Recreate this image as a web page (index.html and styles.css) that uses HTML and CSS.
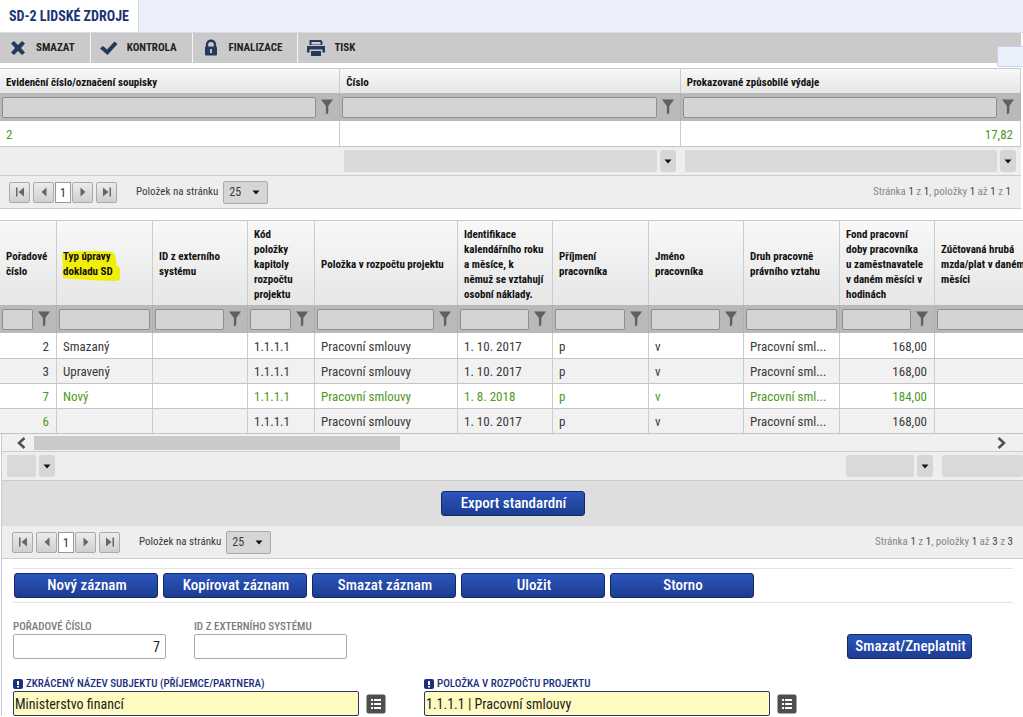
FILE: index.html
```html
<!DOCTYPE html>
<html lang="cs">
<head>
<meta charset="utf-8">
<title>SD-2 Lidské zdroje</title>
<link rel="stylesheet" href="styles.css">
</head>
<body>
<svg class="defs" aria-hidden="true">
  <symbol id="funnel" viewBox="0 0 12 16"><path d="M0 0.500H12L7.300 7V14L4.900 15.500V7Z" fill="#5f5f5f"/></symbol>
  <symbol id="caret" viewBox="0 0 8 5"><path d="M0.500 0.500H7.500L4 4.500Z" fill="#111"/></symbol>
  <symbol id="first" viewBox="0 0 10 10"><path d="M1 0.500H2.500V9.500H1ZM9 0.500V9.500L3.500 5Z" fill="#666"/></symbol>
  <symbol id="prev" viewBox="0 0 10 10"><path d="M7.500 0.500V9.500L2.500 5Z" fill="#666"/></symbol>
  <symbol id="next" viewBox="0 0 10 10"><path d="M2.500 0.500V9.500L7.500 5Z" fill="#666"/></symbol>
  <symbol id="last" viewBox="0 0 10 10"><path d="M7.500 0.500H9V9.500H7.500ZM1 0.500V9.500L6.500 5Z" fill="#666"/></symbol>
  <symbol id="list" viewBox="0 0 20 20"><rect x="0.500" y="0.500" width="19" height="19" rx="2" fill="#4f4f4f"/><path d="M5 5h2v2H5zM8 5h7v2H8zM5 9h2v2H5zM8 9h7v2H8zM5 13h2v2H5zM8 13h7v2H8z" fill="#fff"/></symbol>
  <symbol id="required" viewBox="0 0 10 10"><rect width="10" height="10" rx="2" fill="#1b2f7c"/><path d="M4 2h2v4H4zM4 7h2v1.500H4z" fill="#fff"/></symbol>
</svg>

<div class="page">
  <nav class="tabs"><a class="tab" href="#">SD-2 LIDSKÉ ZDROJE</a></nav>

  <div class="toolbar">
    <button class="tool"><svg class="tool-icon" viewBox="0 0 20 20"><path d="M3 5.500L6 3L10 7L14 3L17 5.500L13 10L17 14.500L14 17L10 13L6 17L3 14.500L7 10Z" fill="#24395b"/></svg>SMAZAT</button>
    <button class="tool"><svg class="tool-icon" viewBox="0 0 20 20"><path d="M1 10.500L4 8L8 11.500L15.500 3.500L18.500 6L8.500 17Z" fill="#24395b"/></svg>KONTROLA</button>
    <button class="tool"><svg class="tool-icon" viewBox="0 0 20 20"><path d="M6 9V6.500C6 1.500 14 1.500 14 6.500V9" fill="none" stroke="#24395b" stroke-width="2.400"/><rect x="4" y="8.500" width="12" height="9" rx="1" fill="#24395b"/><path d="M9 11h2v4H9z" fill="#b9c2d2"/></svg>FINALIZACE</button>
    <button class="tool"><svg class="tool-icon" viewBox="0 0 20 20"><path d="M3.500 2H15L16.500 3.500V7H3.500ZM5.500 4V6.500H14.500V4ZM1 8H19V14.500H16.500V11.500H3.500V14.500H1ZM5 13H15V18H5Z" fill="#24395b" fill-rule="evenodd"/></svg>TISK</button>
    <span class="side-tab"></span>
  </div>

  <section class="grid summary">
    <table class="data">
      <thead>
        <tr class="head"><th scope="col">Evidenční číslo/označení soupisky</th><th scope="col">Číslo</th><th scope="col">Prokazované způsobilé výdaje</th></tr>
        <tr class="filters">
          <td><div class="filter"><input aria-label="Evidenční číslo/označení soupisky"><svg><use href="#funnel"/></svg></div></td>
          <td><div class="filter"><input aria-label="Číslo"><svg><use href="#funnel"/></svg></div></td>
          <td><div class="filter"><input aria-label="Prokazované způsobilé výdaje"><svg><use href="#funnel"/></svg></div></td>
        </tr>
      </thead>
      <tbody><tr class="new"><td>2</td><td></td><td class="num">17,82</td></tr></tbody>
    </table>
    <div class="totals totals-summary">
      <span></span>
      <div class="combo"><input aria-label="Číslo"><button aria-label="Číslo"><svg><use href="#caret"/></svg></button></div>
      <div class="combo"><input aria-label="Prokazované způsobilé výdaje"><button aria-label="Prokazované způsobilé výdaje"><svg><use href="#caret"/></svg></button></div>
    </div>
    <div class="pager">
      <button class="page-btn" aria-label="První"><svg><use href="#first"/></svg></button>
      <button class="page-btn" aria-label="Předchozí"><svg><use href="#prev"/></svg></button><span class="current">1</span><button class="page-btn" aria-label="Další"><svg><use href="#next"/></svg></button>
      <button class="page-btn" aria-label="Poslední"><svg><use href="#last"/></svg></button>
      <label class="size-label" for="size1">Položek na stránku</label>
      <span class="size"><select id="size1"><option>25</option></select><svg><use href="#caret"/></svg></span>
      <span class="info">Stránka <b>1</b> z <b>1</b>, položky <b>1</b> až <b>1</b> z <b>1</b></span>
    </div>
  </section>

  <section class="grid records">
    <table class="data">
      <colgroup><col class="w57"><col class="w96"><col class="w95"><col class="w67"><col class="w143"><col class="w95"><col class="w96"><col class="w95"><col class="w96"><col class="w95"><col></colgroup>
      <thead>
        <tr class="head">
          <th scope="col">Pořadové<br>číslo</th>
          <th scope="col"><span class="marked"><svg class="marker" viewBox="0 0 58 32"><path d="M2 2Q30 0 51 2Q55 6 54 15L58 18V29Q57 31 54 31Q20 30 1 28Q0 20 1 15L0 5Z" fill="#f2ee0c"/></svg>Typ úpravy<br>dokladu SD</span></th>
          <th scope="col">ID z externího<br>systému</th>
          <th scope="col">Kód<br>položky<br>kapitoly<br>rozpočtu<br>projektu</th>
          <th scope="col">Položka v rozpočtu projektu</th>
          <th scope="col">Identifikace<br>kalendářního roku<br>a měsíce, k<br>němuž se vztahují<br>osobní náklady.</th>
          <th scope="col">Příjmení<br>pracovníka</th>
          <th scope="col">Jméno<br>pracovníka</th>
          <th scope="col">Druh pracovně<br>právního vztahu</th>
          <th scope="col">Fond pracovní<br>doby pracovníka<br>u zaměstnavatele<br>v daném měsíci v<br>hodinách</th>
          <th scope="col">Zúčtovaná hrubá<br>mzda/plat v daném<br>měsíci</th>
        </tr>
        <tr class="filters">
          <td><div class="filter"><input aria-label="Pořadové číslo"><svg><use href="#funnel"/></svg></div></td>
          <td><div class="filter"><input aria-label="Typ úpravy dokladu SD"></div></td>
          <td><div class="filter"><input aria-label="ID z externího systému"><svg><use href="#funnel"/></svg></div></td>
          <td><div class="filter"><input aria-label="Kód položky"><svg><use href="#funnel"/></svg></div></td>
          <td><div class="filter"><input aria-label="Položka v rozpočtu"><svg><use href="#funnel"/></svg></div></td>
          <td><div class="filter"><input aria-label="Identifikace měsíce"><svg><use href="#funnel"/></svg></div></td>
          <td><div class="filter"><input aria-label="Příjmení"><svg><use href="#funnel"/></svg></div></td>
          <td><div class="filter"><input aria-label="Jméno"><svg><use href="#funnel"/></svg></div></td>
          <td><div class="filter"><input aria-label="Druh vztahu"></div></td>
          <td><div class="filter"><input aria-label="Fond pracovní doby"><svg><use href="#funnel"/></svg></div></td>
          <td><div class="filter"><input aria-label="Hrubá mzda"><svg><use href="#funnel"/></svg></div></td>
        </tr>
      </thead>
      <tbody>
        <tr><td class="num">2</td><td>Smazaný</td><td></td><td>1.1.1.1</td><td>Pracovní smlouvy</td><td>1. 10. 2017</td><td>p</td><td>v</td><td>Pracovní sml...</td><td class="num">168,00</td><td></td></tr>
        <tr><td class="num">3</td><td>Upravený</td><td></td><td>1.1.1.1</td><td>Pracovní smlouvy</td><td>1. 10. 2017</td><td>p</td><td>v</td><td>Pracovní sml...</td><td class="num">168,00</td><td></td></tr>
        <tr class="new"><td class="num">7</td><td>Nový</td><td></td><td>1.1.1.1</td><td>Pracovní smlouvy</td><td>1. 8. 2018</td><td>p</td><td>v</td><td>Pracovní sml...</td><td class="num">184,00</td><td></td></tr>
        <tr><td class="num fresh">6</td><td></td><td></td><td>1.1.1.1</td><td>Pracovní smlouvy</td><td>1. 10. 2017</td><td>p</td><td>v</td><td>Pracovní sml...</td><td class="num">168,00</td><td></td></tr>
      </tbody>
    </table>
  </section>

  <section class="detail">
    <div class="scroll">
      <button aria-label="Doleva"><svg viewBox="0 0 10 12"><path d="M8.500 1L3 6L8.500 11" fill="none" stroke="#505050" stroke-width="2.500"/></svg></button>
      <div class="track"><div class="thumb"></div></div>
      <button aria-label="Doprava"><svg viewBox="0 0 10 12"><path d="M1.500 1L7 6L1.500 11" fill="none" stroke="#505050" stroke-width="2.500"/></svg></button>
    </div>
    <div class="totals totals-records">
      <div class="combo combo-narrow"><input aria-label="Součet pořadí"><button aria-label="Součet pořadí"><svg><use href="#caret"/></svg></button></div>
      <div class="combo combo-fund"><input aria-label="Součet fondu"><button aria-label="Součet fondu"><svg><use href="#caret"/></svg></button></div>
      <div class="combo combo-cut"><input aria-label="Součet mzdy"></div>
    </div>
    <div class="export"><button class="btn btn-export">Export standardní</button></div>
    <div class="pager">
      <button class="page-btn" aria-label="První"><svg><use href="#first"/></svg></button>
      <button class="page-btn" aria-label="Předchozí"><svg><use href="#prev"/></svg></button><span class="current">1</span><button class="page-btn" aria-label="Další"><svg><use href="#next"/></svg></button>
      <button class="page-btn" aria-label="Poslední"><svg><use href="#last"/></svg></button>
      <label class="size-label" for="size2">Položek na stránku</label>
      <span class="size"><select id="size2"><option>25</option></select><svg><use href="#caret"/></svg></span>
      <span class="info">Stránka <b>1</b> z <b>1</b>, položky <b>1</b> až <b>3</b> z <b>3</b></span>
    </div>

    <form class="form">
      <div class="actions">
        <button type="button" class="btn">Nový záznam</button>
        <button type="button" class="btn">Kopírovat záznam</button>
        <button type="button" class="btn">Smazat záznam</button>
        <button type="button" class="btn">Uložit</button>
        <button type="button" class="btn">Storno</button>
      </div>
      <div class="fields">
        <div class="field"><label for="order">POŘADOVÉ ČÍSLO</label><input id="order" class="num" value="7"></div>
        <div class="field"><label for="ext">ID Z EXTERNÍHO SYSTÉMU</label><input id="ext"></div>
        <button type="button" class="btn btn-void">Smazat/Zneplatnit</button>
      </div>
      <div class="fields fields-required">
        <div class="field required"><label for="subject"><svg><use href="#required"/></svg>ZKRÁCENÝ NÁZEV SUBJEKTU (PŘÍJEMCE/PARTNERA)</label><div class="lookup"><input id="subject" value="Ministerstvo financí"><button type="button" aria-label="Vybrat subjekt"><svg><use href="#list"/></svg></button></div></div>
        <div class="field required"><label for="item"><svg><use href="#required"/></svg>POLOŽKA V ROZPOČTU PROJEKTU</label><div class="lookup"><input id="item" value="1.1.1.1 | Pracovní smlouvy"><button type="button" aria-label="Vybrat položku"><svg><use href="#list"/></svg></button></div></div>
      </div>
    </form>
  </section>
</div>
</body>
</html>
```
FILE: styles.css
```css
* { box-sizing: border-box; }
body { margin: 0; background: #fff; color: #3a3a3a; font: 13px/16px "Roboto Condensed", "Liberation Sans Narrow", Roboto, sans-serif; }
button, input, select { margin: 0; padding: 0; font: inherit; color: inherit; border: 0; background: none; border-radius: 0; }
svg { display: block; flex: none; }
.defs { position: absolute; width: 0; height: 0; }
.page { overflow: hidden; }

.tabs { display: flex; height: 33px; background: #ebeffc; border-bottom: 1px solid #d9dce3; }
.tab { padding: 8px 9px; background: #fff; border-right: 1px solid #d3d6dd; color: #1d3475; font-size: 14px; font-weight: bold; text-decoration: none; white-space: nowrap; }

.toolbar { position: relative; display: flex; height: 30px; margin-right: 2px; background: #cacaca; }
.tool { display: flex; align-items: center; gap: 8px; padding: 0 15px 0 8px; font-size: 11px; font-weight: bold; color: #222; border-right: 1px solid #f4f4f4; white-space: nowrap; }
.tool:last-of-type { border-right: 0; }
.tool-icon { width: 20px; height: 20px; }
.side-tab { position: absolute; right: -4px; top: 13px; width: 28px; height: 21px; background: #e9f0fb; border: 1px solid #c3d3ea; border-radius: 2px; }

.grid { margin-right: 2px; overflow: hidden; }
.summary { margin-top: 5px; }
.records { margin-top: 11px; margin-right: 0; }
.data { width: 100%; table-layout: fixed; border-collapse: separate; border-spacing: 0; border-top: 1px solid #c8c8c8; }
.records .data { width: 1065px; }
.w57 { width: 57px; } .w67 { width: 67px; } .w95 { width: 95px; } .w96 { width: 96px; } .w143 { width: 143px; }
.data th, .data td { text-align: left; border-right: 1px solid #ccc; white-space: nowrap; }
.head { height: 24px; background: linear-gradient(#f8f8f8, #e6e6e6); }
.head th { padding: 2px 6px 0; font-size: 11px; line-height: 15px; font-weight: bold; color: #111; }
.records .head { height: 84px; }
.filters { height: 28px; background: #b9b9b9; }
.data .filters td { padding: 0 2px; border-color: #b0b0b0; }
.filter { display: flex; align-items: center; gap: 5px; }
.filter input { flex: 1; min-width: 0; height: 21px; background: #d4d4d4; border: 1px solid #8e8e8e; border-radius: 2px; }
.filter svg { width: 12px; height: 16px; margin-right: 4px; }
.data tbody tr { height: 25px; }
.data tbody tr:first-child { height: 26px; }
.data tbody td { padding: 2px 6px 0; border-bottom: 1px solid #c4c4c4; }
.records tbody tr:nth-child(even) { background: #f1f1f1; }
.new td, .data .fresh { color: #4c9a21; }
.data .num { text-align: right; padding-right: 7px; }
.marked { position: relative; z-index: 0; display: inline-block; }
.marker { position: absolute; z-index: -1; left: -1px; top: 1px; width: 58px; height: 32px; }

.totals { height: 29px; padding-top: 3px; background: #eee; border-bottom: 1px solid #ccc; }
.totals-summary { display: grid; grid-template-columns: repeat(3, 1fr); }
.totals-summary .combo { padding: 0 5px 0 4px; }
.combo { display: flex; gap: 3px; height: 22px; }
.combo input { flex: 1; min-width: 0; background: #d9d9d9; border-radius: 2px; }
.combo button { display: grid; place-items: center; width: 16px; background: #d6d6d6; border-radius: 3px; }
.combo svg, .size svg { width: 8px; height: 5px; }
.totals-records { display: flex; padding-left: 5px; }
.combo-narrow { width: 48px; }
.combo-fund { width: 87px; margin-left: auto; margin-right: 9px; }
.combo-cut { width: 81px; }

.pager { display: flex; align-items: center; height: 33px; padding: 0 10px 0 9px; background: #eee; border-bottom: 1px solid #ccc; }
.page-btn { display: grid; place-items: center; width: 21px; height: 21px; border: 1px solid #aaa; border-radius: 2px; background: linear-gradient(#ececec, #cfcfcf); }
.page-btn svg { width: 10px; height: 10px; }
.page-btn:first-child { margin-right: 3px; }
.page-btn:nth-of-type(4) { margin-left: 3px; }
.current { width: 16px; height: 21px; margin: 0 1px; border: 1px solid #999; background: #fff; line-height: 19px; text-align: center; }
.size-label { margin: 0 5px 0 19px; font-size: 11px; white-space: nowrap; }
.size { position: relative; display: flex; align-items: center; }
.size select { appearance: none; width: 45px; height: 23px; padding-left: 5px; font-size: 12px; border: 1px solid #aaa; border-radius: 2px; background: #d6d6d6; }
.size svg { position: absolute; right: 8px; pointer-events: none; }
.info { margin-left: auto; font-size: 11px; color: #888; white-space: nowrap; }
.info b { font-weight: normal; color: #444; }

.detail { border-left: 1px solid #c5cad8; margin-left: 1px; }
.detail .pager { padding-left: 10px; }
.scroll { display: flex; height: 18px; padding: 1px 16px 1px 14px; background: #f0f0f0; border-bottom: 1px solid #ccc; align-items: center; }
.scroll svg { width: 10px; height: 12px; }
.track { flex: 1; height: 14px; padding-left: 8px; }
.thumb { width: 38%; height: 14px; background: #cacaca; }
.export { display: flex; justify-content: center; align-items: center; height: 45px; background: #dedede; }
.btn { width: 144px; height: 25px; padding-left: 2px; border: 1px solid #14296b; border-radius: 3px; background: linear-gradient(#2c56bd, #1c3c90); color: #fff; font-size: 15px; font-weight: 500; line-height: 23px; white-space: nowrap; }

.form { padding: 9px 10px 0 11px; }
.actions { display: flex; gap: 5px; padding: 4px 1px; border-top: 1px solid #e2e3ea; border-bottom: 1px solid #e2e3ea; }
.fields { display: flex; align-items: flex-end; gap: 28px; margin-top: 17px; }
.field label { display: flex; align-items: center; gap: 3px; height: 14px; font-size: 11px; font-weight: 500; color: #7b7b7b; white-space: nowrap; }
.field input { width: 153px; height: 25px; border: 1px solid #aaa; border-radius: 2px; font-size: 14px; color: #222; }
.field .num { text-align: right; padding-right: 5px; }
.btn-void { width: 125px; margin-left: auto; margin-right: 41px; }
.fields-required { gap: 38px; margin-top: 18px; }
.required label { color: #1b2f7c; }
.required label svg { width: 10px; height: 10px; }
.lookup { display: flex; align-items: center; gap: 7px; }
.field .lookup input { width: 346px; background: #fffac0; border-color: #26386f; padding-left: 1px; }
.lookup svg { width: 20px; height: 20px; }
```
